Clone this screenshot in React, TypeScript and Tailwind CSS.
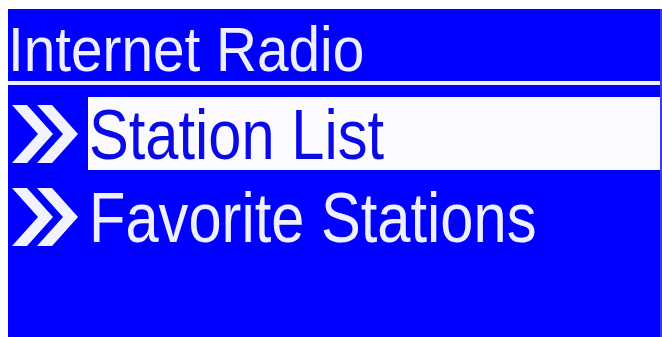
import React from "react";

const Chevrons = () => (
  <svg width="66" height="58" viewBox="0 0 66 58" className="shrink-0">
    <polygon points="0,0 15,0 41,29 15,58 0,58 26,29" fill="#f2f3ff" />
    <polygon points="25,0 40,0 66,29 40,58 25,58 51,29" fill="#f2f3ff" />
  </svg>
);

const MenuRow = ({ label, selected }: { label: string; selected?: boolean }) => (
  <div className="flex h-[73px] items-stretch">
    <div className="flex w-[80px] shrink-0 items-center pl-[4px]">
      <Chevrons />
    </div>
    <div
      className={
        selected
          ? "flex-1 bg-[#fbfbff] pt-[2px] pl-[1px] text-[#0a0ae6]"
          : "flex-1 pt-[2px] pl-[1px] text-[#eef0ff]"
      }
    >
      <p className="origin-left scale-x-[0.84] whitespace-nowrap text-[71px] leading-none">{label}</p>
    </div>
  </div>
);

export default function App() {
  return (
    <div className="h-[337px] w-[662px] overflow-hidden bg-white pt-[9px] pl-[8px] font-['Liberation_Sans',Arial,sans-serif]">
      <div className="flex h-[328px] flex-col border-r-2 border-[#3a3aff] bg-[#0000fe]">
        <div className="pt-[9px]">
          <p className="origin-left scale-x-[0.9] whitespace-nowrap text-[63px] leading-none text-[#eef0ff]">
            Internet Radio
          </p>
        </div>
        <div className="h-[4px] bg-[#eef0ff]" />
        <div className="mt-[12px] flex flex-col gap-[10px]">
          <MenuRow label="Station List" selected />
          <MenuRow label="Favorite Stations" />
        </div>
      </div>
    </div>
  );
}
